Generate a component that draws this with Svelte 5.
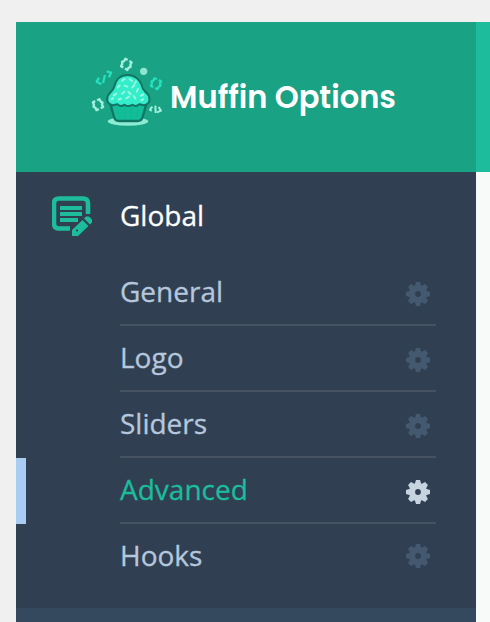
<script lang="ts">
	interface Item {
		id: string;
		label: string;
	}

	const items: Item[] = [
		{ id: 'general', label: 'General' },
		{ id: 'logo', label: 'Logo' },
		{ id: 'sliders', label: 'Sliders' },
		{ id: 'advanced', label: 'Advanced' },
		{ id: 'hooks', label: 'Hooks' }
	];

	const teeth = [0, 45, 90, 135, 180, 225, 270, 315];

	// curly brace pairs floating round the muffin
	const braces = [
		{ x: 139, y: 58, angle: 30, color: '#a2f0dd' },
		{ x: 54, y: 179, angle: -25, color: '#a2f0dd' },
		{ x: 228, y: 116, angle: 25, color: '#24e0bd' }
	];

	let active = $state('advanced');
</script>

<div class="page">
	<div class="panel">
		<aside class="sidebar">
			<header class="brand">
				<svg class="muffin" viewBox="30 30 225 225" fill="none">
					<ellipse cx="144" cy="229" rx="61" ry="13" fill="#8cecd2" />
					<path d="M91 176h108l-11 40q-3 12-15 12h-56q-12 0-15-12z" fill="#13bd98" stroke="#127563" stroke-width="7" />
					<path d="M113 192l5 26M133 192l2 30M155 192l-2 30M175 192l-5 26" stroke="#12b792" stroke-width="3" />
					<path
						d="M96 180C80 176 77 160 87 147C93 140 98 138 102 127C107 102 124 90 143 90S181 102 187 127C190 138 197 140 203 147C213 160 210 176 195 180C187 182 184 177 178 178C171 184 163 184 158 179C150 184 140 184 134 179C127 184 119 184 113 178C107 177 103 182 96 180Z"
						fill="#34edca"
						stroke="#127563"
						stroke-width="6"
						stroke-linejoin="round"
					/>
					<path
						d="M126 107l8-5M149 102l7 6M113 128l6-7M134 122l8 3M157 127l6-7M174 132l-4 8M101 151l8-5M126 146l7-6M145 141l7 6M183 152l7-4M116 164l7-3M94 163l5-3M139 160l8-5M161 153l5 7M168 109l-3 5M184 166l5-3"
						stroke="#9af9e1"
						stroke-width="6"
						stroke-linecap="round"
					/>
					{#each braces as b}
						<path
							d="M-3-13h-8v8l-4 5 4 5v8h8M3-13h8v8l4 5-4 5v8H3"
							transform="translate({b.x} {b.y}) rotate({b.angle})"
							stroke={b.color}
							stroke-width="7"
							stroke-linejoin="round"
						/>
					{/each}
					<path d="M217 185l-7 9 5 4M226 182l1 22M236 186l7 11-12 5" stroke="#a2f0dd" stroke-width="6" stroke-linejoin="round" />
					<circle cx="191" cy="79" r="11" fill="#8ce6d0" />
					<path d="M57 98l-7 12 14 8M75 90l-6 24M80 79l13 4-6 14" stroke="#24e0bd" stroke-width="7" stroke-linejoin="round" />
				</svg>
				<svg class="wordmark" viewBox="0 0 226 44" role="img" aria-label="Muffin Options">
					<text x="0" y="32" textLength="226" lengthAdjust="spacingAndGlyphs">Muffin Options</text>
				</svg>
			</header>

			<nav>
				<button class="section">
					<svg class="section-icon" viewBox="0 0 40 40" fill="none">
						<path d="M18 32.500H7Q2 32.500 2 27.500V7.500Q2 2.500 7 2.500h24q5 0 5 5V18" stroke="currentColor" stroke-width="4.600" />
						<path d="M8 12h22M8 18h22M8 24h18" stroke="currentColor" stroke-width="4" />
						<path d="M20 40v-6l10.500-10 6 6L26 40zM32 22.500l2-2h3l3 3v3l-2 2z" fill="currentColor" />
						<circle cx="25" cy="34.500" r="1.100" fill="#304052" />
					</svg>
					<span class="label">Global</span>
				</button>
				<ul class="items">
					{#each items as item (item.id)}
						<li class:active={active === item.id}>
							<button class="item" onclick={() => (active = item.id)}>
								<span class="label">{item.label}</span>
								<svg class="gear" viewBox="-12 -12 24 24">
									{#each teeth as angle}
										<path d="M-3.600-7L-2-12H2L3.600-7Z" transform="rotate({angle})" />
									{/each}
									<path fill-rule="evenodd" d="M0-9A9 9 0 1 0 0 9A9 9 0 1 0 0-9ZM0-2.900A2.900 2.900 0 1 1 0 2.900A2.900 2.900 0 1 1 0-2.900Z" />
								</svg>
							</button>
						</li>
					{/each}
				</ul>
			</nav>
			<div class="next-section"></div>
		</aside>
		<main class="content">
			<div class="content-head"></div>
		</main>
	</div>
</div>

<style>
	:global(body) {
		margin: 0;
		background: #f0f0f0;
	}

	.page {
		box-sizing: border-box;
		height: 622px;
		padding: 22px 0 0 16px;
		overflow: hidden;
		font-family: 'Open Sans', sans-serif;
		font-size: 28px;
	}

	.panel {
		display: flex;
		height: 600px;
	}

	.sidebar {
		display: flex;
		flex-direction: column;
		flex: 0 0 460px;
		background: #304052;
	}

	.brand {
		box-sizing: border-box;
		display: flex;
		align-items: flex-start;
		height: 150px;
		padding: 33px 0 0 74px;
		background: #1aa284;
	}

	.muffin {
		width: 75px;
		height: 75px;
		flex-shrink: 0;
	}

	.wordmark {
		width: 226px;
		height: 44px;
		margin: 21px 0 0 5px;
		overflow: visible;
		fill: #fff;
		font-family: Poppins, Inter, sans-serif;
		font-size: 31px;
		font-weight: 600;
	}

	button {
		background: none;
		border: none;
		padding: 0;
		font: inherit;
		color: inherit;
		text-align: left;
		cursor: pointer;
	}

	.label {
		padding-bottom: 2px;
		-webkit-text-stroke: 0.3px currentColor;
	}

	.section {
		display: flex;
		align-items: center;
		width: 100%;
		height: 88px;
		padding-left: 36px;
		gap: 28px;
		color: #fff;
	}

	.section-icon {
		width: 40px;
		height: 40px;
		color: #1cbc9d;
	}

	.items {
		list-style: none;
		margin: 0;
		padding: 0 0 18px;
		color: #b5c7dd;
	}

	.items li {
		box-sizing: border-box;
		height: 66px;
		padding: 0 40px 0 94px;
		border-left: 10px solid transparent;
	}
	.items li.active {
		border-left-color: #a9cdf2;
		color: #1cbc9d;
	}

	.item {
		box-sizing: border-box;
		display: flex;
		align-items: center;
		justify-content: space-between;
		width: 100%;
		height: 66px;
		padding-right: 6px;
		border-bottom: 2px solid #465261;
	}
	.items li:last-child .item {
		height: 64px;
		border-bottom: none;
	}

	.gear {
		width: 24px;
		height: 24px;
		margin-top: 4px;
		fill: #445970;
	}
	.items li:last-child .gear { margin-top: 0; }
	.active .gear { fill: #c8d3e0; }

	.next-section {
		flex: 1;
		background: #34495e;
	}

	.content {
		flex: 1;
		background: #f8fafa;
	}

	.content-head {
		height: 150px;
		background: #1cbc9d;
	}
</style>
